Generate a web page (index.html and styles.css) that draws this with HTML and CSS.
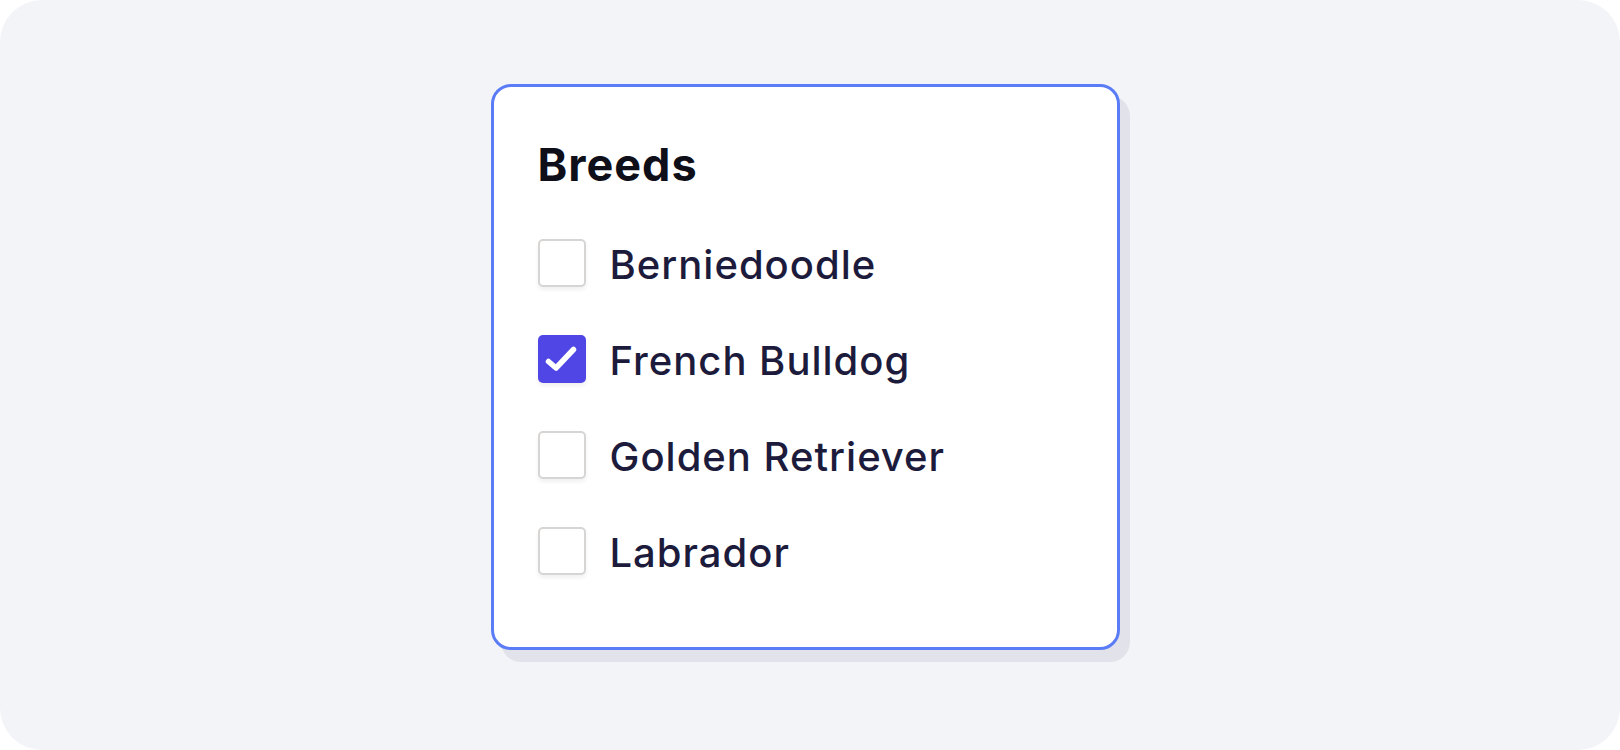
FILE: index.html
```html
<!DOCTYPE html>
<html lang="en">

<head>
    <meta charset="UTF-8">
    <meta name="viewport" content="width=device-width, initial-scale=1.0">
    <title>Breeds</title>
    <link rel="stylesheet" href="styles.css">
</head>

<body>
  <div class="frame">
    <div class="cardWrap">
      <div class="card">
        <h2 class="title">Breeds</h2>
        <div class="list">
          <label class="item">
            <span class="box"></span>
            <span class="name">Berniedoodle</span>
          </label>
          <label class="item">
            <span class="box checked">
              <svg width="48" height="48" viewBox="0 0 48 48"><path d="M10.5 26.5 L18 33 L35.5 14.5" fill="none" stroke="#fff" stroke-width="5.5" stroke-linecap="round" stroke-linejoin="round"/></svg>
            </span>
            <span class="name">French Bulldog</span>
          </label>
          <label class="item">
            <span class="box"></span>
            <span class="name">Golden Retriever</span>
          </label>
          <label class="item">
            <span class="box"></span>
            <span class="name">Labrador</span>
          </label>
        </div>
      </div>
    </div>
  </div>
</body>
</html>
```

FILE: styles.css
```css
body{
    margin: 0;
    background-color: #ffffff;
    font-family: Inter, 'Noto Sans', sans-serif;
}

.frame {
    height: 750px;
    background-color: #f3f4f8;
    border-radius: 42px;
    display: flex;
    align-items: center;
    justify-content: center;
}

.cardWrap {
    padding-right: 10px;
    padding-bottom: 12px;
    margin-top: -4px;
}

.card {
    box-sizing: border-box;
    width: 629px;
    padding: 55px 42px 72px 44px;
    background-color: #ffffff;
    border: 3px solid #5b7cf7;
    border-radius: 20px;
    box-shadow: 10px 12px 0 #e2e3ea;
}

.title {
    margin: 0 0 52px 0;
    font-size: 45px;
    line-height: 45px;
    font-weight: 700;
    letter-spacing: 1px;
    color: #0f0f1a;
}

.list {
    display: flex;
    flex-direction: column;
    gap: 48px;
}

.item {
    display: flex;
    align-items: center;
    gap: 24px;
    height: 48px;
}

.box {
    box-sizing: border-box;
    width: 48px;
    height: 48px;
    border: 2px solid #d7d5d3;
    border-radius: 5px;
    background-color: #ffffff;
    box-shadow: 0 3px 4px rgba(20, 20, 40, 0.06);
}

.box.checked {
    border: none;
    background-color: #4f46e5;
}

.box svg {
    display: block;
}

.name {
    font-size: 40px;
    line-height: 48px;
    padding-top: 3px;
    font-weight: 500;
    letter-spacing: 1px;
    color: #1d1b3c;
}
```
